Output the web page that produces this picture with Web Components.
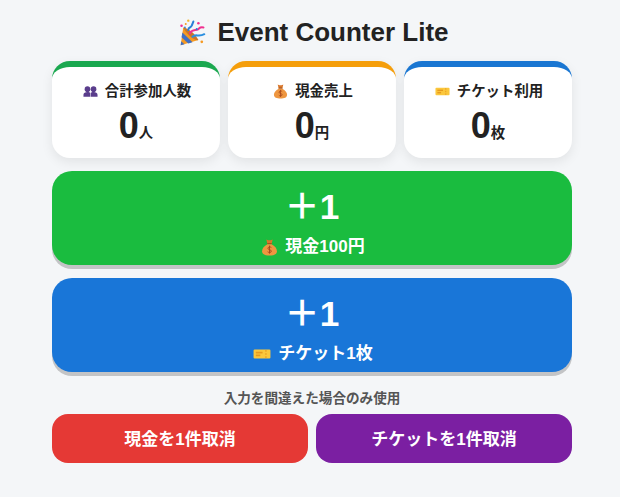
<!DOCTYPE html>
<html lang="ja">
<head>
<meta charset="utf-8">
<title>Event Counter Lite</title>
<style>
    html, body { margin: 0; padding: 0; background: #f4f6f8; }
    body
    {
        font-family: "Liberation Sans", "Noto Sans CJK JP", sans-serif;
        color: #222;
    }
</style>
</head>
<body>

<ec-app></ec-app>

<script>
const ICONS =
{
    party: `
        <path d="M2 31 L5 10 L23 25 Z" fill="#f59a23"/>
        <path d="M4 16 L16 27.500 L11 29 L3 21.500 Z" fill="#3f6fc4"/>
        <path d="M2.600 26.500 L6.500 30 L2 31 Z" fill="#3f6fc4"/>
        <path d="M5 10 C10 10 20 18 23 25 C18 26 8 17 5 10 Z" fill="#c9762a"/>
        <path d="M13 17 C16 11 21 15 24 11 C25.500 9.500 27 9.500 29 10" fill="none" stroke="#f0308f" stroke-width="2.400" stroke-linecap="round"/>
        <path d="M16 21 C20 17 23 22 30 18" fill="none" stroke="#2a8fe0" stroke-width="2.400" stroke-linecap="round"/>
        <path d="M11 13 C11 9 14 11 15 8 L17 3" fill="none" stroke="#2a7fd8" stroke-width="2.400" stroke-linecap="round"/>
        <circle cx="3" cy="8" r="1.500" fill="#f0308f"/><circle cx="8" cy="6" r="1.200" fill="#f59a23"/>
        <circle cx="11" cy="2" r="1.400" fill="#f2b632"/><circle cx="23" cy="5" r="1.500" fill="#f0308f"/>
        <circle cx="21" cy="12" r="1.200" fill="#2a7fd8"/><circle cx="27" cy="27" r="1.600" fill="#f59a23"/>
        <circle cx="7" cy="10" r="1" fill="#2a7fd8"/>`,
    people: `
        <circle cx="9.500" cy="11" r="6" fill="#5a3d8c"/><circle cx="22.500" cy="11" r="6" fill="#5a3d8c"/>
        <path d="M1 27 V23 C1 19 5 17 9.500 17 C12.500 17 14.500 18 15.500 19 V27 Z" fill="#5a3d8c"/>
        <path d="M31 27 V23 C31 19 27 17 22.500 17 C19.500 17 17.500 18 16.500 19 V27 Z" fill="#5a3d8c"/>`,
    money: `
        <path d="M10 1 C12 3 20 3 22 1 L20 9 H12 Z" fill="#d9772b"/>
        <rect x="11.500" y="7.500" width="9" height="2.500" rx="1" fill="#a8541c"/>
        <path d="M12 10 H20 C26 13 30 18 30 23 C30 29 24 31 16 31 C8 31 2 29 2 23 C2 18 6 13 12 10 Z" fill="#ee9640"/>
        <path d="M19.500 16 C18.500 14.500 13 14.500 13 17.500 C13 21 19.500 19.500 19.500 23 C19.500 26 14 26 12.500 24 M16 12.500 V27.500" fill="none" stroke="#a8481c" stroke-width="1.800"/>`,
    ticket: `
        <path d="M3 8 H29 A2 2 0 0 1 31 10 V22 A2 2 0 0 1 29 24 H3 A2 2 0 0 1 1 22 V10 A2 2 0 0 1 3 8 Z" fill="#fbc73c"/>
        <rect x="5" y="12" width="12" height="3" fill="#e79a1e"/><rect x="5" y="17" width="8" height="3" fill="#e79a1e"/>
        <rect x="22" y="9" width="2" height="3" fill="#e79a1e"/><rect x="22" y="14.500" width="2" height="3" fill="#e79a1e"/><rect x="22" y="20" width="2" height="3" fill="#e79a1e"/>`
};

class EcIcon extends HTMLElement
{
    constructor()
    {
        super();

        this.dom = this.attachShadow({mode: 'open'});

        this.dom.innerHTML = `
            <style>
                :host
                {
                    display: inline-block;
                    flex: none;
                    width: var(--size, 16px);
                    height: var(--size, 16px);
                }
                svg { display: block; width: 100%; height: 100%; }
            </style>
            <svg viewBox="0 0 32 32">${ICONS[this.getAttribute("name")]}</svg>
        `;
    }
}

class EcCard extends HTMLElement
{
    constructor()
    {
        super();

        this.dom = this.attachShadow({mode: 'open'});

        this.dom.innerHTML = `
            <style>
                :host
                {
                    flex: 1;
                    display: block;
                    background: #fff;
                    border-radius: 18px;
                    border-top: 6px solid var(--accent);
                    box-shadow: 0 4px 12px rgba(0,0,0,.08);
                    height: 91px;
                    text-align: center;
                }
                .label
                {
                    display: flex;
                    justify-content: center;
                    align-items: center;
                    gap: 7px;
                    font-size: 14.4px;
                    font-weight: 700;
                    line-height: 20px;
                    padding: 14px 0 0 2px;
                }
                .value
                {
                    font-size: 36px;
                    font-weight: 700;
                    line-height: 41px;
                    margin-top: 4px;
                }
                .unit { font-size: 14.4px; }
            </style>
            <div class="label"><slot name="icon"></slot><slot name="label"></slot></div>
            <div class="value">${this.getAttribute("value")}<span class="unit">${this.getAttribute("unit")}</span></div>
        `;
    }
}

class EcAdd extends HTMLElement
{
    constructor()
    {
        super();

        this.dom = this.attachShadow({mode: 'open'});

        this.dom.innerHTML = `
            <style>
                :host
                {
                    display: flex;
                    flex-direction: column;
                    align-items: center;
                    height: 94px;
                    border-radius: 20px;
                    background: var(--bg);
                    color: #fff;
                    font-weight: 700;
                    box-shadow: 0 4px 0 rgba(0,0,0,.2);
                    cursor: pointer;
                }
                .big { font-size: 35.2px; line-height: 41px; margin-top: 15px; }
                .small
                {
                    display: flex;
                    align-items: center;
                    gap: 7px;
                    font-size: 17px;
                    line-height: 24px;
                    margin-top: 8px;
                    padding-left: 2px;
                }
            </style>
            <div class="big">＋1</div>
            <div class="small"><slot name="icon"></slot><slot></slot></div>
        `;
    }
}

class EcUndo extends HTMLElement
{
    constructor()
    {
        super();

        this.dom = this.attachShadow({mode: 'open'});

        this.dom.innerHTML = `
            <style>
                :host
                {
                    flex: 1;
                    display: flex;
                    justify-content: center;
                    align-items: center;
                    box-sizing: border-box;
                    height: 49px;
                    padding-bottom: 2px;
                    border-radius: 16px;
                    background: var(--bg);
                    color: #fff;
                    font-size: 17px;
                    font-weight: 700;
                    cursor: pointer;
                }
            </style>
            <slot></slot>
        `;
    }
}

class EcApp extends HTMLElement
{
    constructor()
    {
        super();

        this.dom = this.attachShadow({mode: 'open'});

        this.dom.innerHTML = `
            <style>
                :host
                {
                    display: block;
                    width: 520px;
                    margin: 0 48px 0 52px;
                    padding: 16px 0 0 0;
                }
                h1
                {
                    display: flex;
                    justify-content: center;
                    align-items: center;
                    gap: 11px;
                    margin: 0 0 13px 0;
                    padding-left: 4px;
                    font-size: 26px;
                    line-height: 32px;
                    font-weight: 700;
                }
                .cards { display: flex; gap: 8px; margin-bottom: 13px; }
                .add { display: flex; flex-direction: column; gap: 13px; }
                .note
                {
                    margin: 17px 0 6px 0;
                    font-size: 13.6px;
                    line-height: 19px;
                    font-weight: 700;
                    color: #555;
                    text-align: center;
                }
                .undo { display: flex; gap: 8px; }
            </style>
            <h1><ec-icon name="party" style="--size:27px"></ec-icon>Event Counter Lite</h1>
            <div class="cards">
                <ec-card style="--accent:#1aa84f" value="0" unit="人"><ec-icon slot="icon" name="people" style="--size:15px"></ec-icon><span slot="label">合計参加人数</span></ec-card>
                <ec-card style="--accent:#f59e0b" value="0" unit="円"><ec-icon slot="icon" name="money" style="--size:15px"></ec-icon><span slot="label">現金売上</span></ec-card>
                <ec-card style="--accent:#1976d2" value="0" unit="枚"><ec-icon slot="icon" name="ticket" style="--size:15px"></ec-icon><span slot="label">チケット利用</span></ec-card>
            </div>
            <div class="add">
                <ec-add style="--bg:#1abc3f"><ec-icon slot="icon" name="money" style="--size:17px"></ec-icon>現金100円</ec-add>
                <ec-add style="--bg:#1976d8"><ec-icon slot="icon" name="ticket" style="--size:18px"></ec-icon>チケット1枚</ec-add>
            </div>
            <div class="note">入力を間違えた場合のみ使用</div>
            <div class="undo">
                <ec-undo style="--bg:#e53935">現金を1件取消</ec-undo>
                <ec-undo style="--bg:#7b1fa2">チケットを1件取消</ec-undo>
            </div>
        `;
    }
}

customElements.define("ec-icon", EcIcon);
customElements.define("ec-card", EcCard);
customElements.define("ec-add", EcAdd);
customElements.define("ec-undo", EcUndo);
customElements.define("ec-app", EcApp);
</script>
</body>
</html>
